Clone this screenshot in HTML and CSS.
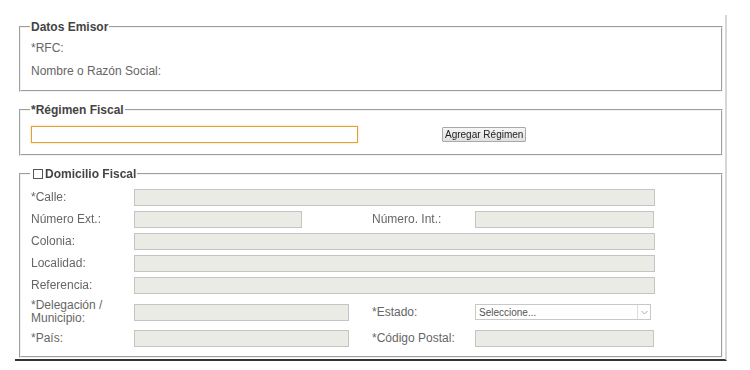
FILE: index.html
```html
<!DOCTYPE html>
<html>
<head>
    <meta name="viewport" content="width=device-width, initial-scale=1.0">
    <link rel="stylesheet" href="styles.css">
</head>
<body>
    <div class="form-wrap">
        <fieldset class="box box-emisor">
            <legend>Datos Emisor</legend>
            <div class="info-row">*RFC:</div>
            <div class="info-row">Nombre o Razón Social:</div>
        </fieldset>

        <fieldset class="box box-regimen">
            <legend>*Régimen Fiscal</legend>
            <div class="regimen-row">
                <input type="text" class="regimen-input" autofocus>
                <button class="btn">Agregar Régimen</button>
            </div>
        </fieldset>

        <fieldset class="box box-domicilio">
            <legend><span class="check"></span>Domicilio Fiscal</legend>
            <div class="grid">
                <label>*Calle:</label>
                <input class="field full" disabled>

                <label>Número Ext.:</label>
                <input class="field ext" disabled>
                <label>Número. Int.:</label>
                <input class="field half" disabled>

                <label>Colonia:</label>
                <input class="field full" disabled>

                <label>Localidad:</label>
                <input class="field full" disabled>

                <label>Referencia:</label>
                <input class="field full" disabled>

                <label>*Delegación /<br>Municipio:</label>
                <input class="field mid" disabled>
                <label>*Estado:</label>
                <div class="select">
                    <span>Seleccione...</span>
                    <span class="arrow">
                        <svg width="7" height="5" viewBox="0 0 7 5"><path d="M0.5 1 L3.5 4 L6.5 1" fill="none" stroke="#aaa" stroke-width="1"/></svg>
                    </span>
                </div>

                <label>*País:</label>
                <input class="field mid" disabled>
                <label>*Código Postal:</label>
                <input class="field half" disabled>
            </div>
        </fieldset>
    </div>
</body>
</html>
```

FILE: styles.css
```css
* {
    margin: 0;
    padding: 0;
    box-sizing: border-box;
    font-family: 'Liberation Sans', Arial, sans-serif;
}

body {
    background: #fff;
    font-size: 12px;
    color: #666;
}

.form-wrap {
    width: 712px;
    margin: 15px 0 0 15px;
    padding: 5px 2px 1px 4px;
    border-right: 2px solid #d6d6d6;
    border-bottom: 2px solid #333;
}

.box {
    border: 2px groove #f2f2f2;
    padding: 0 9px;
    margin-bottom: 11px;
}

.box:last-child {
    margin-bottom: 0;
}

.box legend {
    font-size: 12px;
    font-weight: bold;
    color: #444;
    line-height: 14px;
    padding: 0 1px 0 1px;
    display: flex;
    align-items: center;
}

.box-emisor {
    padding-top: 7px;
    padding-bottom: 12px;
}

.info-row {
    line-height: 14px;
    padding-left: 1px;
}

.info-row + .info-row {
    margin-top: 9px;
}

.box-regimen {
    padding-top: 9px;
    padding-bottom: 11px;
}

.regimen-row {
    display: flex;
    align-items: center;
    padding-left: 1px;
}

.regimen-input {
    width: 327px;
    height: 17px;
    border: 1px solid #e0a33a;
    box-shadow: 0 0 2px #f3cf90;
    outline: none;
    padding: 0 2px;
    font-size: 12px;
    caret-color: #555;
}

.btn {
    margin-left: 84px;
    height: 15px;
    padding: 0 2px;
    font-size: 10px;
    color: #222;
    background: linear-gradient(#f6f6f6, #e0e0e0);
    border: 1px solid #a9a9a9;
    border-radius: 1px;
    line-height: 13px;
}

.box-domicilio {
    padding-top: 8px;
    padding-bottom: 9px;
}

.check {
    width: 10px;
    height: 10px;
    border: 1px solid #555;
    background: #fff;
    margin: 0 2px 0 2px;
}

.grid {
    display: grid;
    grid-template-columns: 103px 238px 103px 180px;
    row-gap: 5px;
    align-items: center;
    padding-left: 1px;
}

.grid label {
    line-height: 13px;
    color: #666;
}

.field {
    height: 17px;
    background: #ebebe6;
    border: 1px solid #c4c4c4;
}

.full {
    grid-column: 2 / 5;
    width: 521px;
}

.ext {
    width: 168px;
}

.mid {
    width: 215px;
}

.half {
    width: 179px;
}

.select {
    width: 176px;
    height: 16px;
    border: 1px solid #c8c8c8;
    background: #fff;
    display: flex;
    align-items: center;
    justify-content: space-between;
    font-size: 10px;
    color: #555;
    padding-left: 3px;
}

.arrow {
    width: 13px;
    height: 14px;
    border-left: 1px solid #ddd;
    display: flex;
    align-items: center;
    justify-content: center;
}
```
